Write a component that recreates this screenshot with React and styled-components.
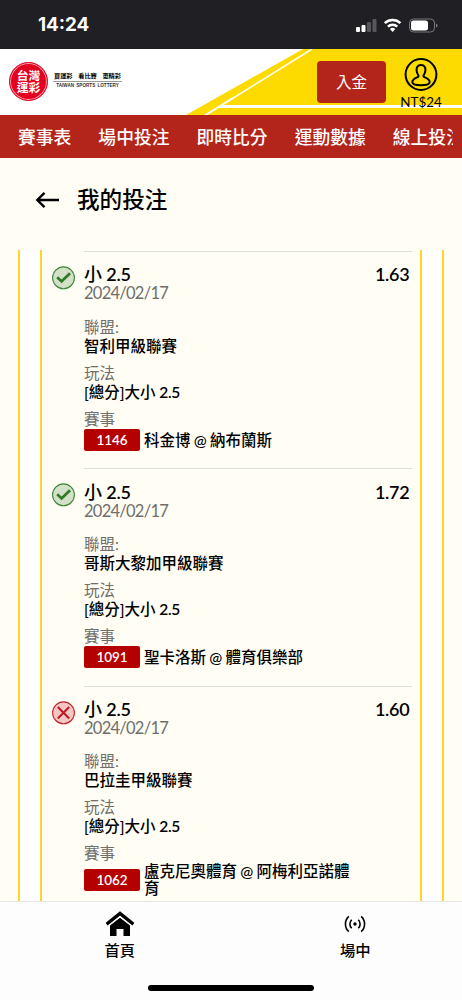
import React from 'react'
import styled, { createGlobalStyle } from 'styled-components'

const GlobalStyle = createGlobalStyle`
* { box-sizing: border-box; }
body {
    margin: 0;
    background: #fffdf4;
    font-family: Lato, "Noto Sans CJK TC", sans-serif;
    color: #000;
}
`;

const Page = styled.div`
width: 462px;
height: 1000px;
display: flex;
flex-direction: column;
overflow: hidden;
background: #fffdf4;
`;

const StatusBar = styled.div`
height: 49px;
flex: none;
background: #1f1f24;
color: #fff;
display: flex;
align-items: center;
justify-content: space-between;
padding: 1px 23px 0 38px;
font: 700 18.8px/24px Inter, sans-serif;
`;

const Header = styled.header`
height: 66px;
flex: none;
position: relative;
background: #fff;
display: flex;
padding: 0 20px 0 9px;
`;

const HeaderArt = styled.svg`
position: absolute;
left: 0;
top: 0;
`;

const Logo = styled.div`
position: relative;
display: flex;
gap: 5px;
margin-top: 13px;
height: 40px;
`;

const Seal = styled.div`
width: 39px;
height: 39px;
border-radius: 50%;
background: #e5001f;
border: 1px solid #e5001f;
box-shadow: inset 0 0 0 1px #f7a9b0;
color: #fff;
display: flex;
flex-direction: column;
align-items: center;
justify-content: center;
font-size: 11.8px;
font-weight: 700;
line-height: 12px;
`;

const Slogan = styled.div`
width: 69px;
padding-top: 9px;
text-align: center;
white-space: nowrap;
`;

const SloganTop = styled.div`
display: flex;
justify-content: space-between;
padding: 0 1px;
font-size: 6.2px;
font-weight: 700;
line-height: 10px;
height: 11px;
border-bottom: 1px solid #999;
`;

const SloganSub = styled.div`
font: 700 4.6px/8px "Liberation Sans", sans-serif;
word-spacing: 1px;
color: #333;
`;

const Deposit = styled.button`
position: relative;
margin: 12px 0 0 auto;
width: 69px;
height: 42px;
border: 0;
border-radius: 4px;
background: #b3251b;
color: #fff;
font: 400 15.5px/20px Lato, "Noto Sans CJK TC", sans-serif;
padding: 0;
`;

const Account = styled.div`
position: relative;
width: 42px;
margin: 9px 0 0 14px;
display: flex;
flex-direction: column;
align-items: center;
font-size: 13.4px;
line-height: 21px;
svg { display: block; flex: none; }
`;

const Nav = styled.nav`
height: 43px;
flex: none;
background: #b3251b;
color: #fff;
display: flex;
align-items: center;
padding: 0 9px 2px 18px;
font-size: 17.8px;
font-weight: 500;
`;

const NavItems = styled.div`
display: flex;
gap: 27px;
overflow: hidden;
white-space: nowrap;
`;

const TitleBar = styled.div`
height: 92px;
flex: none;
display: flex;
align-items: flex-start;
gap: 17px;
padding: 26px 35px 0;
svg { margin-top: 7px; }
`;

const Title = styled.h1`
margin: 0;
font-size: 22.6px;
font-weight: 500;
line-height: 32px;
`;

const Panel = styled.main`
flex: 1;
min-height: 0;
margin: 0 18px;
background: #fff;
border: solid #ffd52b;
border-width: 0 2px;
padding: 0 20px;
display: flex;
overflow: hidden;
`;

const BetList = styled.div`
flex: 1;
background: #fffdf4;
border: solid #ffd52b;
border-width: 0 2px;
padding: 1px 8px 0 10px;
`;

const BetRow = styled.div`
display: flex;
gap: 8px;
height: 217.3px;
`;

const StatusIcon = styled.svg`
flex: none;
margin-top: 15px;
`;

const BetBody = styled.div`
flex: 1;
border-top: 1px solid #e1dfda;
padding-top: 12.4px;
`;

const BetHead = styled.div`
display: flex;
justify-content: space-between;
padding-right: 2.5px;
font-size: 18px;
font-weight: 500;
line-height: 20px;
`;

const Num = styled.span`
font-weight: 600;
letter-spacing: -0.25px;
`;

const DateText = styled.div`
font-size: 16.5px;
letter-spacing: -0.74px;
line-height: 18px;
color: #6f6e6b;
margin-bottom: 15.4px;
`;

const Label = styled.div`
font-size: 15.5px;
line-height: 19px;
color: #6f6e6b;
`;

const Value = styled.div`
font-size: 15.5px;
font-weight: 500;
line-height: 19px;
margin-bottom: 8px;
`;

const Match = styled.div`
display: flex;
align-items: center;
gap: 4px;
min-height: 22.5px;
padding-right: 55px;
font-size: 15.5px;
font-weight: 500;
line-height: 16.5px;
word-spacing: -0.7px;
`;

const Badge = styled.span`
flex: none;
width: 56px;
height: 22px;
border-radius: 2px;
background: #b50000;
color: #fff;
text-align: center;
font-size: 13.5px;
font-weight: 600;
letter-spacing: -0.1px;
line-height: 22px;
`;

const TabBar = styled.footer`
height: 99px;
flex: none;
background: #fdfdfd;
border-top: 1px solid #e6e6e4;
position: relative;
display: flex;
padding-left: 2px;
`;

const Tab = styled.div`
flex: none;
width: 235.5px;
display: flex;
flex-direction: column;
align-items: center;
padding-top: 9px;
font-size: 15.3px;
font-weight: 500;
line-height: 22px;
svg { display: block; margin-bottom: 2px; }
`;

const HomeIndicator = styled.div`
position: absolute;
left: 148px;
bottom: 9px;
width: 166px;
height: 6px;
border-radius: 3px;
background: #000;
`;

const navItems = ['賽事表', '場中投注', '即時比分', '運動數據', '線上投注']

const bets = [
    { won: true, odds: '1.63', league: '智利甲級聯賽', id: '1146', match: '科金博 @ 納布蘭斯' },
    { won: true, odds: '1.72', league: '哥斯大黎加甲級聯賽', id: '1091', match: '聖卡洛斯 @ 體育俱樂部' },
    { won: false, odds: '1.60', league: '巴拉圭甲級聯賽', id: '1062', match: '盧克尼奧體育 @ 阿梅利亞諾體育' },
]

const PhoneStatus = () => (
    <svg width="84" height="18" viewBox="0 0 84 18">
        <rect x="1" y="11" width="4" height="5" rx="1" fill="#fff" />
        <rect x="6.5" y="9" width="4" height="7" rx="1" fill="#fff" />
        <rect x="12" y="6" width="4" height="10" rx="1" fill="#56565b" />
        <rect x="17.5" y="3" width="4" height="13" rx="1" fill="#56565b" />
        <g fill="none" stroke="#fff" strokeWidth="2.5">
            <path d="M29.8 7.2a11.3 11.3 0 0 1 15.6 0" />
            <path d="M32.9 10.6a6.8 6.8 0 0 1 9.4 0" />
        </g>
        <path d="M34.9 13a4 4 0 0 1 5.4 0L37.6 16z" fill="#fff" />
        <rect x="54.5" y="3" width="25" height="13" rx="4" fill="none" stroke="#77777b" />
        <rect x="56" y="4.5" width="17" height="10" rx="2.5" fill="#fff" />
        <path d="M81 7.5v4q1.600-.5 1.600-2t-1.600-2" fill="#77777b" />
    </svg>
)

const ResultIcon = ({ won }) => (
    <StatusIcon width="24" height="24" viewBox="0 0 24 24">
        <circle cx="11.5" cy="11.8" r="10.9" fill={won ? '#d3e1c9' : '#f3c8c4'} stroke={won ? '#3f873c' : '#c3212b'} strokeWidth="1.1" />
        {won
            ? <path d="M5.200 11.300l4.400 4.100 8.400-8.200" fill="none" stroke="#327827" strokeWidth="2.8" />
            : <path d="M5.800 6l11.400 11.500M17.200 6L5.800 17.500" fill="none" stroke="#be1824" strokeWidth="2" />}
    </StatusIcon>
)

const Bet = ({ won, odds, league, id, match }) => (
    <BetRow>
        <ResultIcon won={won} />
        <BetBody>
            <BetHead>
                <span>小<Num> 2.5</Num></span>
                <Num>{odds}</Num>
            </BetHead>
            <DateText>2024/02/17</DateText>
            <Label>聯盟:</Label>
            <Value>{league}</Value>
            <Label>玩法</Label>
            <Value>[總分]大小<Num> 2.5</Num></Value>
            <Label>賽事</Label>
            <Match>
                <Badge>{id}</Badge>
                <span>{match}</span>
            </Match>
        </BetBody>
    </BetRow>
)

export default function App() {
    return (
        <Page>
            <GlobalStyle />
            <StatusBar>
                <span>14:24</span>
                <PhoneStatus />
            </StatusBar>
            <Header>
                <HeaderArt width="462" height="66" viewBox="0 0 462 66">
                    <path d="M186 66L303 0h159v66z" fill="#fedb00" />
                    <path d="M206 66L312 0" stroke="#fff" strokeWidth="1.6" />
                    <path d="M204 66l27-17 3 .5L223 56h239v3H217l-11 7z" fill="#fff" />
                </HeaderArt>
                <Logo>
                    <Seal>
                        <span>台灣</span>
                        <span>運彩</span>
                    </Seal>
                    <Slogan>
                        <SloganTop>
                            <span>買運彩</span>
                            <span>看比賽</span>
                            <span>更精彩</span>
                        </SloganTop>
                        <SloganSub>TAIWAN SPORTS LOTTERY</SloganSub>
                    </Slogan>
                </Logo>
                <Deposit>入金</Deposit>
                <Account>
                    <svg width="34" height="34" viewBox="0 0 34 34" fill="none" stroke="#000" strokeWidth="2">
                        <circle cx="17" cy="16.5" r="15.4" />
                        <path d="M17 7c-3.400 0-4.700 2.500-4.400 5.700.2 2.100 1 3.500 1.800 4.600.3 1-.2 1.700-1.200 2.100-2.500 1-4.700 2-4.900 4.500 0 4.300 17.400 4.300 17.400 0-.2-2.500-2.400-3.500-4.900-4.500-1-.4-1.500-1.100-1.200-2.100.8-1.100 1.600-2.500 1.800-4.600C21.700 9.500 20.400 7 17 7z" />
                    </svg>
                    <span>NT$24</span>
                </Account>
            </Header>
            <Nav>
                <NavItems>
                    {navItems.map((item) => <span key={item}>{item}</span>)}
                </NavItems>
            </Nav>
            <TitleBar>
                <svg width="25" height="18" viewBox="0 0 25 18" fill="none" stroke="#000" strokeWidth="2.4">
                    <path d="M24 9H2.500M9.500 1.800L2.300 9l7.200 7.200" />
                </svg>
                <Title>我的投注</Title>
            </TitleBar>
            <Panel>
                <BetList>
                    {bets.map((bet) => <Bet key={bet.id} {...bet} />)}
                </BetList>
            </Panel>
            <TabBar>
                <Tab>
                    <svg width="28" height="26" viewBox="0 0 28 26">
                        <path d="M.6 13.300L14 2.500l13.400 10.800" fill="none" stroke="#000" strokeWidth="3.4" />
                        <path d="M4 14.500L14 6.800l10 7.700V25h-6.500v-7h-7v7H4z" />
                        <path d="M2.500 14.800L14 5.700l11.500 9.100" fill="none" stroke="#fdfdfd" strokeWidth="1" />
                    </svg>
                    首頁
                </Tab>
                <Tab>
                    <svg width="22" height="26" viewBox="0 0 22 26" fill="none" stroke="#000" strokeWidth="1.6">
                        <circle cx="11" cy="13" r="1.7" fill="#000" stroke="none" />
                        <path d="M7.700 8.700a6 6 0 0 0 0 8.600M14.300 8.700a6 6 0 0 1 0 8.600M4.800 5.300a10.500 10.500 0 0 0 0 15.400M17.200 5.300a10.500 10.500 0 0 1 0 15.400" />
                    </svg>
                    場中
                </Tab>
                <HomeIndicator />
            </TabBar>
        </Page>
    )
}
